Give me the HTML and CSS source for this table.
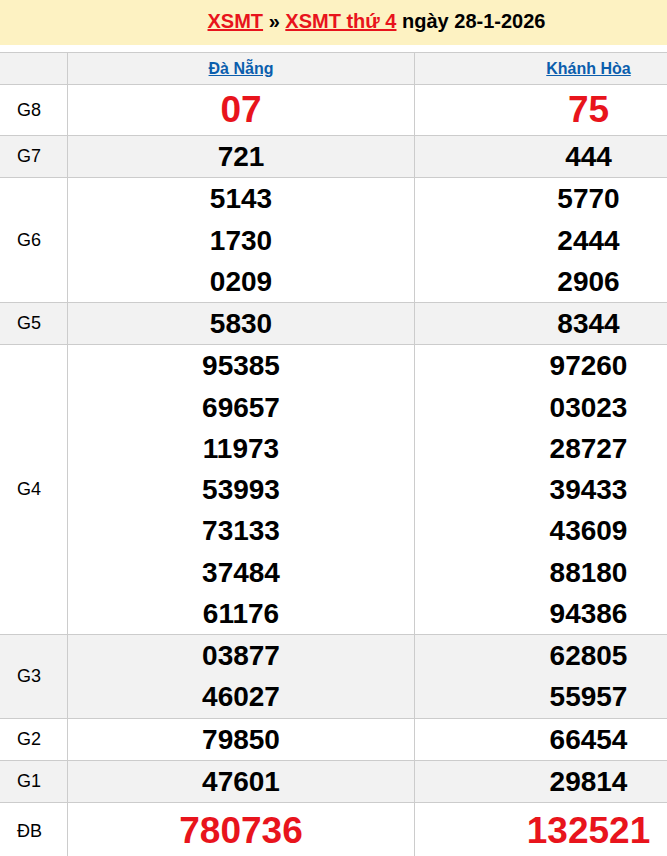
FILE: index.html
```html
<!DOCTYPE html>
<html lang="vi">
<head>
<meta charset="utf-8">
<title>XSMT thứ 4 ngày 28-1-2026</title>
<link rel="stylesheet" href="styles.css">
</head>
<body>
<div class="page">
  <h1 class="title"><a href="#">XSMT</a> » <a href="#">XSMT thứ 4</a> ngày 28-1-2026</h1>
  <table class="results">
    <colgroup><col class="c-label"><col class="c-prov"><col class="c-prov2"></colgroup>
    <thead>
      <tr class="shade head">
        <th></th>
        <th><a href="#">Đà Nẵng</a></th>
        <th><a href="#">Khánh Hòa</a></th>
      </tr>
    </thead>
    <tbody>
      <tr class="big">
        <td class="lbl">G8</td>
        <td class="red">07</td>
        <td class="red">75</td>
      </tr>
      <tr class="shade">
        <td class="lbl">G7</td>
        <td><div>721</div></td>
        <td><div>444</div></td>
      </tr>
      <tr>
        <td class="lbl">G6</td>
        <td><div>5143</div><div>1730</div><div>0209</div></td>
        <td><div>5770</div><div>2444</div><div>2906</div></td>
      </tr>
      <tr class="shade">
        <td class="lbl">G5</td>
        <td><div>5830</div></td>
        <td><div>8344</div></td>
      </tr>
      <tr>
        <td class="lbl">G4</td>
        <td><div>95385</div><div>69657</div><div>11973</div><div>53993</div><div>73133</div><div>37484</div><div>61176</div></td>
        <td><div>97260</div><div>03023</div><div>28727</div><div>39433</div><div>43609</div><div>88180</div><div>94386</div></td>
      </tr>
      <tr class="shade">
        <td class="lbl">G3</td>
        <td><div>03877</div><div>46027</div></td>
        <td><div>62805</div><div>55957</div></td>
      </tr>
      <tr>
        <td class="lbl">G2</td>
        <td><div>79850</div></td>
        <td><div>66454</div></td>
      </tr>
      <tr class="shade">
        <td class="lbl">G1</td>
        <td><div>47601</div></td>
        <td><div>29814</div></td>
      </tr>
      <tr class="db">
        <td class="lbl">ĐB</td>
        <td class="red">780736</td>
        <td class="red">132521</td>
      </tr>
    </tbody>
  </table>
</div>
</body>
</html>
```

FILE: styles.css
```css
html, body {
  margin: 0;
  padding: 0;
  overflow: hidden;
  background: #ffffff;
}

.page {
  width: 763px;
  font-family: "Liberation Sans", Arial, sans-serif;
  color: #000;
}

.title {
  margin: 0 0 7px 0;
  height: 45px;
  line-height: 43px;
  background: #fdf2c2;
  font-size: 20px;
  font-weight: bold;
  text-align: center;
  padding-right: 10px;
}

.title a {
  color: #e8141c;
  text-decoration: underline;
}

.results {
  width: 763px;
  border-collapse: collapse;
  table-layout: fixed;
  margin-left: -1px;
}

.c-label { width: 68px; }
.c-prov { width: 347px; }
.c-prov2 { width: 348px; }

.results th,
.results td {
  border: 1px solid #cccccc;
  padding: 0;
  text-align: center;
  vertical-align: middle;
}

.shade th,
.shade td {
  background: #f2f2f2;
}

.head th {
  height: 31px;
  font-size: 16px;
  font-weight: bold;
}

.head a {
  color: #0b5ead;
  text-decoration: underline;
}

.results td {
  font-size: 28px;
  font-weight: bold;
}

.results td div {
  height: 41.25px;
  line-height: 41.25px;
}

.results td.lbl {
  font-size: 18px;
  font-weight: normal;
  text-align: left;
  padding-left: 17px;
}

.big td {
  height: 50px;
}

.db td {
  height: 56px;
}

.results td.red {
  color: #e8141c;
  font-size: 37px;
  line-height: 40px;
}
```
